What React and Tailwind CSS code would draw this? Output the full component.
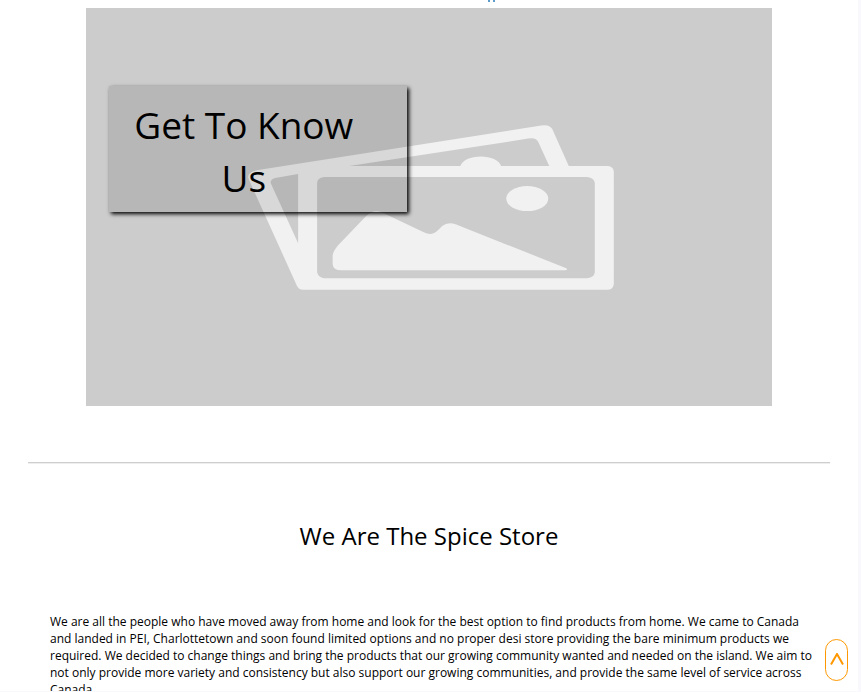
function PlaceholderPicture() {
  return (
    <svg
      viewBox="86 8 686 398"
      className="block w-full"
      role="img"
      aria-label="Placeholder picture"
    >
      <rect x="86" y="8" width="686" height="398" fill="#ccc" />
      <g fill="#f1f1f1">
        <path
          fillRule="evenodd"
          d="M258 170 L541 125.500 Q549 124 552 129 L568.500 166 H608 Q613.500 167 613.500 172 V284 Q612.500 289.500 607 289.500 H303 Q299 289.500 297 286 L248.500 179 Q246 172 258 170 Z
             M275 178 Q269 180 271 184 L298 243 V174 Z
             M349 166 H549 L538 142 Q536 137 528 138.500 Z
             M324 177 Q317 178 317 183 V272 Q318 277 324 278 H587 Q594 277 594.500 272 V183 Q594 178 587 177 Z"
        />
        <path d="M460 166.500 C463 153 498 153 501 166.500 Z" />
        <ellipse cx="527" cy="198.500" rx="21" ry="12.500" />
        <path d="M332.500 255 Q333 251 338 245 L366 216 Q373 209 381 212 L422 231.500 Q431 237 438 230 L442 226 Q448 221 456 224.500 L566 268 Q568 270 565 270 H341 Q333 270 332.500 264 Z" />
      </g>
    </svg>
  );
}

export default function App() {
  return (
    <div className="h-screen overflow-hidden bg-[#f8f8fd] pr-[3px] pb-px font-['Open_Sans','Noto_Sans',sans-serif] text-black">
      <main className="h-full overflow-hidden bg-white">
        <div className="flex h-2 items-start justify-center gap-[3px] pl-[125px]" aria-hidden="true">
          <span className="h-0.5 w-0.5 bg-[#5d9bc8]" />
          <span className="h-0.5 w-0.5 bg-[#5d9bc8]" />
        </div>

        <section className="relative mx-auto w-4/5">
          <PlaceholderPicture />
          <div className="absolute top-[78px] left-[23px] w-[298px] bg-black/10 pt-3 pr-7 pb-2 shadow-[2px_2px_4px_#000]">
            <h1 className="text-center text-[37px] leading-[53px] font-normal">
              Get To Know
              <br />
              Us
            </h1>
          </div>
        </section>

        <hr className="mx-7 mt-14 border-t border-b border-t-[#cecece] border-b-[#eeeeee]" />

        <section>
          <h2 className="mt-[55px] text-center text-[24px] leading-[34px] font-normal">
            We Are The Spice Store
          </h2>
          <p className="mt-[60px] pr-[42px] pl-[50px] text-[12px] leading-[17px]">
            We are all the people who have moved away from home and look for the best option to find
            products from home. We came to Canada and landed in PEI, Charlottetown and soon found
            limited options and no proper desi store providing the bare minimum products we
            required. We decided to change things and bring the products that our growing community
            wanted and needed on the island. We aim to not only provide more variety and consistency
            but also support our growing communities, and provide the same level of service across
            Canada.
          </p>
        </section>
      </main>

      <button
        type="button"
        aria-label="Back to top"
        className="fixed right-[13px] bottom-[11px] flex h-[42px] w-[23px] items-center justify-center rounded-full border border-[#ff9800] bg-white text-[#ff9800]"
      >
        <svg viewBox="0 0 14 14" className="h-3.5 w-3.5 shrink-0" fill="none" stroke="currentColor" strokeWidth="2">
          <path d="M1 11.500 L7 1 L13 11.500" />
        </svg>
      </button>
    </div>
  );
}
